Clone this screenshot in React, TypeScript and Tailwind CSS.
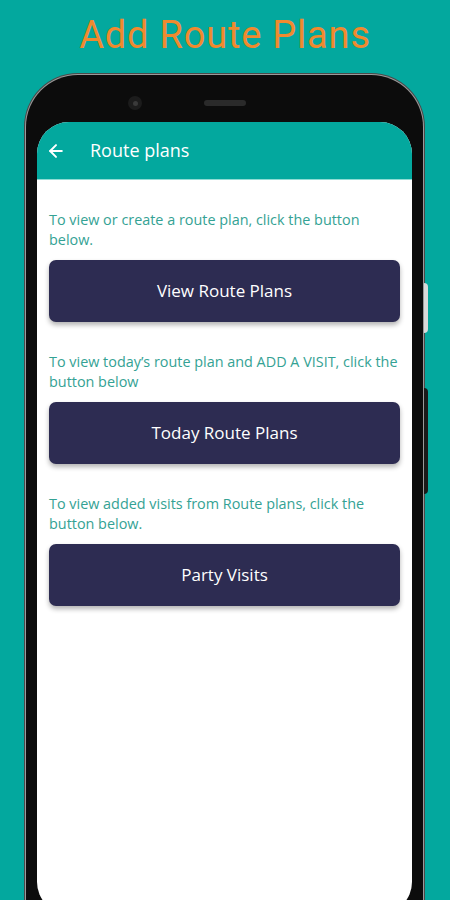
import { ArrowLeft } from "lucide-react"

const sections = [
  { hint: "To view or create a route plan, click the button below.", label: "View Route Plans" },
  { hint: "To view today’s route plan and ADD A VISIT, click the button below", label: "Today Route Plans" },
  { hint: "To view added visits from Route plans, click the button below.", label: "Party Visits" },
]

export default function App() {
  return (
    <div className="w-[450px] h-[900px] overflow-hidden bg-[#03a89e] flex flex-col items-center">
      <h1
        className="mt-[12px] h-[46px] text-[38px] leading-[46px] text-[#f08a2e] tracking-[0.8px]"
        style={{ fontFamily: "Roboto, sans-serif" }}
      >
        Add Route Plans
      </h1>

      <div className="relative mt-[15px] w-[401px] ml-[-1px]">
        {/* side buttons */}
        <div className="absolute right-[-3px] top-[210px] h-[50px] w-[4px] rounded-r bg-[#d9d9d9]" />
        <div className="absolute right-[-3px] top-[315px] h-[106px] w-[4px] rounded-r bg-[#1a1a1a]" />

        <div className="rounded-[54px] bg-[#4a4a4a] p-[1px]">
          <div className="rounded-[53px] bg-[#9a9a9a] p-[1px]">
            <div className="rounded-[52px] bg-[#0c0c0c] px-[11px] pt-[47px] h-[900px]">
              {/* camera + speaker */}
              <div className="absolute left-[104px] top-[23px] h-[14px] w-[14px] rounded-full bg-[#1c1c1c] flex items-center justify-center">
                <div className="h-[5px] w-[5px] rounded-full bg-[#3a3a3a]" />
              </div>
              <div className="absolute left-[180px] top-[27px] h-[6px] w-[42px] rounded-full bg-[#2a2a2a]" />

              <div className="h-[792px] rounded-[32px] overflow-hidden bg-white" style={{ fontFamily: "'Open Sans', sans-serif" }}>
                <div className="h-[58px] bg-[#03a89e] border-b border-[#8fdcd4] flex items-center pl-[6px]">
                  <ArrowLeft size={20} strokeWidth={2.4} className="text-white ml-[3px]" />
                  <span className="ml-[24px] text-[18px] text-white">Route plans</span>
                </div>

                <div className="px-[12px] pt-[30px] flex flex-col">
                  {sections.map((s) => (
                    <div key={s.label} className="mb-[30px]">
                      <p className="text-[14.4px] leading-[20px] text-[#34a294] pr-[2px]">{s.hint}</p>
                      <button className="mt-[10px] w-full h-[62px] rounded-[7px] bg-[#2d2c52] text-white text-[17px] font-medium shadow-[0_3px_5px_rgba(0,0,0,0.3)]">
                        {s.label}
                      </button>
                    </div>
                  ))}
                </div>
              </div>
            </div>
          </div>
        </div>
      </div>
    </div>
  )
}
